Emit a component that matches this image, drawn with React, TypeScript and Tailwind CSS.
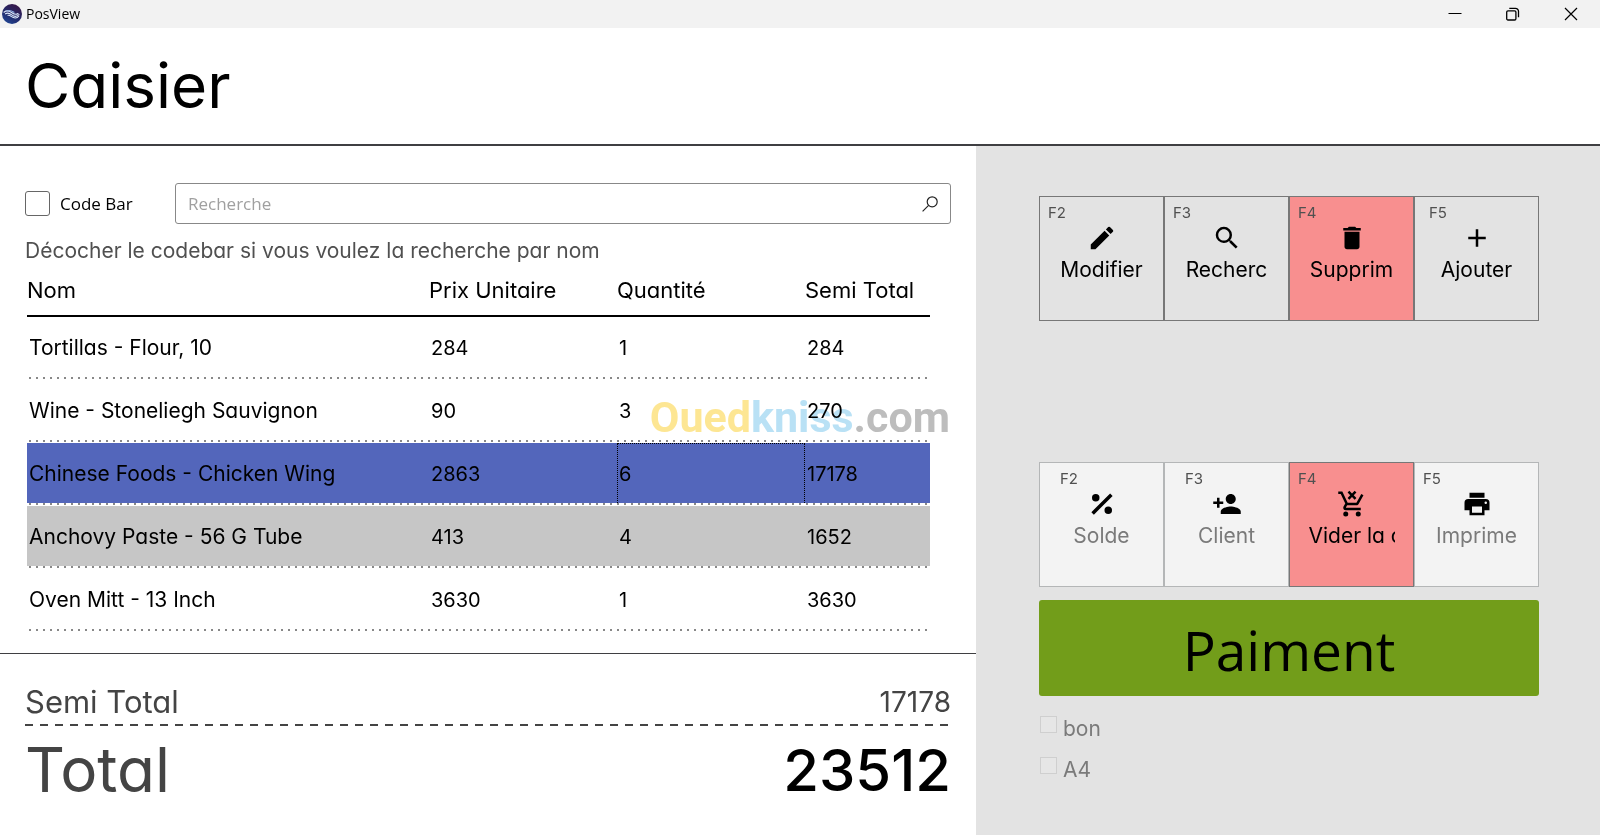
import type { ReactNode } from "react";
import { MdAdd, MdDelete, MdEdit, MdPersonAdd, MdSearch } from "react-icons/md";

type Line = { name: string; price: number; qty: number; total: number; state?: "selected" | "hover" };

const lines: Line[] = [
  { name: "Tortillas - Flour, 10", price: 284, qty: 1, total: 284 },
  { name: "Wine - Stoneliegh Sauvignon", price: 90, qty: 3, total: 270 },
  { name: "Chinese Foods - Chicken Wing", price: 2863, qty: 6, total: 17178, state: "selected" },
  { name: "Anchovy Paste - 56 G Tube", price: 413, qty: 4, total: 1652, state: "hover" },
  { name: "Oven Mitt - 13 Inch", price: 3630, qty: 1, total: 3630 },
];

function MdiIcon({ d }: { d: string }) {
  return (
    <svg viewBox="0 0 24 24" className="size-[30px]" fill="currentColor" aria-hidden="true">
      <path d={d} />
    </svg>
  );
}

const percentPath =
  "M18.5,3.5L3.5,18.5L5.5,20.5L20.5,5.5M7,4A3,3 0 0,0 4,7A3,3 0 0,0 7,10A3,3 0 0,0 10,7A3,3 0 0,0 7,4M17,14A3,3 0 0,0 14,17A3,3 0 0,0 17,20A3,3 0 0,0 20,17A3,3 0 0,0 17,14Z";
const cartRemovePath =
  "M14.12,8.53L12,6.41L9.88,8.54L8.47,7.12L10.59,5L8.47,2.88L9.88,1.47L12,3.59L14.12,1.46L15.54,2.88L13.41,5L15.53,7.12L14.12,8.53M7,18A2,2 0 0,1 9,20A2,2 0 0,1 7,22A2,2 0 0,1 5,20A2,2 0 0,1 7,18M17,18A2,2 0 0,1 19,20A2,2 0 0,1 17,22A2,2 0 0,1 15,20A2,2 0 0,1 17,18M7.17,14.75A0.25,0.25 0 0,0 7.42,15H19V17H7A2,2 0 0,1 5,15C5,14.65 5.09,14.32 5.24,14.04L6.6,11.59L3,4H1V2H4.27L5.21,4L8.53,11H15.55L19.42,4L21.16,4.96L17.3,11.97C16.96,12.59 16.3,13 15.55,13H8.1L7.2,14.63L7.17,14.75Z";
const printerPath =
  "M18,3H6V7H18M19,12A1,1 0 0,1 18,11A1,1 0 0,1 19,10A1,1 0 0,1 20,11A1,1 0 0,1 19,12M16,19H8V14H16M19,8H5A3,3 0 0,0 2,11V17H6V21H18V17H22V11A3,3 0 0,0 19,8Z";

const tones = {
  plain: "border-[#777] bg-transparent text-black",
  danger: "border-[#777] bg-[#f88f8f] text-black",
  disabled: "border-[#b4b6b7] bg-[#f3f3f3] text-[#7a7a7a]",
};

function ActionButton({
  shortcut,
  label,
  icon,
  tone = "plain",
  inset = "near",
}: {
  shortcut: string;
  label: string;
  icon: ReactNode;
  tone?: keyof typeof tones;
  inset?: "near" | "mid" | "far";
}) {
  const pad = { near: "pl-2", mid: "pl-3.5", far: "pl-5" }[inset];
  return (
    <button
      type="button"
      disabled={tone === "disabled"}
      className={`flex h-[125px] flex-col items-center border pt-1.5 ${tones[tone]}`}
    >
      <span className={`w-full text-left text-[15px] leading-5 text-[#505050] ${pad}`}>{shortcut}</span>
      <span className="flex h-[30px] items-center text-black">{icon}</span>
      <span className="mt-0.5 w-[86px] overflow-hidden text-center text-[21px] leading-[30px] whitespace-nowrap">
        {label}
      </span>
    </button>
  );
}

function TitleBar() {
  return (
    <div className="flex h-7 items-center bg-[#f2f2f2] pl-0.5 font-['Open_Sans',sans-serif]">
      <svg viewBox="0 0 20 20" className="size-5" aria-hidden="true">
        <defs>
          <linearGradient id="badge" x1="0.8" y1="0" x2="0.2" y2="1">
            <stop offset="0" stopColor="#3a1545" />
            <stop offset="0.55" stopColor="#232a6b" />
            <stop offset="1" stopColor="#1f4796" />
          </linearGradient>
        </defs>
        <circle cx="10" cy="10" r="10" fill="url(#badge)" />
        <g fill="none" stroke="#dbe8fb" strokeWidth="1.1" strokeLinecap="round">
          <path d="M2 8.2c3-2.4 5.400-1.200 7.500.3s4.500 2.500 6.500 1" />
          <path d="M3.500 9.800c2.500-1.800 4.500-.3 6.300 1.100s4.700 2.300 7.200-.4" />
          <path d="M6 11.300c2-.4 3 1.200 4.800 2 2.200 1 4.700.6 6-1.300" />
          <path d="M5 7c3-1.500 5 0 7 1.200" stroke="#8fb1e6" />
        </g>
      </svg>
      <span className="pl-1 text-[14px] leading-5 text-black">PosView</span>
      <div className="ml-auto flex h-full text-black">
        <button type="button" aria-label="Minimize" className="grid w-[58px] place-items-center">
          <svg viewBox="0 0 14 14" className="size-3.5" fill="none" stroke="currentColor">
            <path d="M0.500 6.500h13" />
          </svg>
        </button>
        <button type="button" aria-label="Restore" className="grid w-[58px] place-items-center">
          <svg viewBox="0 0 14 14" className="size-3.5" fill="none" stroke="currentColor" strokeWidth="1.300">
            <rect x="0.700" y="3.800" width="9.200" height="9.200" rx="1.300" />
            <path d="M3.300 1.300h6.200a3 3 0 0 1 3 3v6" />
          </svg>
        </button>
        <button type="button" aria-label="Close" className="grid w-[58px] place-items-center">
          <svg viewBox="0 0 14 14" className="size-3.5" fill="none" stroke="currentColor" strokeWidth="1.200">
            <path d="M1 1l12 12M13 1L1 13" />
          </svg>
        </button>
      </div>
    </div>
  );
}

function SaleTable() {
  const fills = { none: "", selected: "bg-[#5366bb]", hover: "bg-[#c6c6c6]" };
  return (
    <div className="relative mr-[21px] ml-0.5">
      <table className="w-full table-fixed border-separate border-spacing-0 text-left text-black">
        <colgroup>
          <col />
          <col className="w-[188px]" />
          <col className="w-[188px]" />
          <col className="w-[125px]" />
        </colgroup>
        <thead>
          <tr className="h-[51px] text-[22px]">
            {["Nom", "Prix Unitaire", "Quantité", "Semi Total"].map((h) => (
              <th key={h} scope="col" className="border-b-2 border-black p-0 font-normal whitespace-nowrap">
                {h}
              </th>
            ))}
          </tr>
        </thead>
        <tbody className="text-[20px]">
          {lines.map((l) => {
            const cell = `border-b-3 border-transparent bg-clip-padding p-0 pt-0.5 pl-0.5 ${fills[l.state ?? "none"]}`;
            return (
              <tr
                key={l.name}
                className="h-[63px] bg-[repeating-linear-gradient(90deg,#888_0_2px,transparent_2px_7px)] bg-[length:calc(100%-5px)_2px] bg-[position:2px_calc(100%-1px)] bg-no-repeat"
              >
                <td className={`text-[21px] ${cell}`}>{l.name}</td>
                <td className={cell}>{l.price}</td>
                <td className={`relative ${cell}`}>
                  {l.qty}
                  {l.state === "selected" && (
                    <span className="absolute inset-0 border border-b-0 border-dotted border-black" />
                  )}
                </td>
                <td className={cell}>{l.total}</td>
              </tr>
            );
          })}
        </tbody>
      </table>
      <div className="pointer-events-none absolute top-[121px] -right-5 font-['Roboto',sans-serif] text-[43px] leading-[60px] font-bold mix-blend-multiply">
        <span className="text-[#fde693]">Oued</span>
        <span className="text-[#b9e1f5]">kniss</span>
        <span className="text-[#bdbdbd]">.com</span>
      </div>
    </div>
  );
}

function PrintOption({ id, label }: { id: string; label: string }) {
  return (
    <div className="flex h-[41px] items-start gap-1.5 pl-px">
      <input
        id={id}
        type="checkbox"
        disabled
        className="size-[17px] appearance-none border border-[#cfcfcf] bg-[#e6e6e6]"
      />
      <label htmlFor={id} className="text-[21px] leading-[26px] text-[#7a7a7a]">
        {label}
      </label>
    </div>
  );
}

export default function App() {
  return (
    <div className="flex min-h-screen flex-col bg-white font-['Inter',sans-serif] [font-feature-settings:'cv11']">
      <TitleBar />
      <header className="border-b-2 border-[#3f3f42] px-[25px] pt-[22px] pb-[22px]">
        <h1 className="text-[62px] leading-[72px] text-black">Caisier</h1>
      </header>

      <main className="grid flex-1 grid-cols-[61fr_39fr]">
        <div className="flex flex-col">
          <section className="px-[25px] pt-[37px]">
            <div className="flex items-center font-['Open_Sans',sans-serif] text-[17px]">
              <input
                id="codebar"
                type="checkbox"
                className="size-[25px] appearance-none rounded-[3px] border border-[#666] bg-white"
              />
              <label htmlFor="codebar" className="w-[125px] pl-2.5 text-black">
                Code Bar
              </label>
              <div className="flex h-[41px] flex-1 items-center rounded-[3px] border border-[#888] px-3">
                <input
                  type="text"
                  aria-label="Recherche"
                  placeholder="Recherche"
                  className="min-w-0 flex-1 bg-transparent outline-none placeholder:text-[#a0a0a0]"
                />
                <svg viewBox="0 0 16 16" className="size-4" fill="none" stroke="#222" strokeWidth="1.200">
                  <circle cx="10.200" cy="5.800" r="5" />
                  <path d="M6.600 9.400L0.600 15.400" />
                </svg>
              </div>
            </div>
            <p className="mt-3 text-[21px] leading-[30px] text-[#505050]">
              Décocher le codebar si vous voulez la recherche par nom
            </p>
            <SaleTable />
          </section>

          <section className="mt-auto border-t border-[#3f3f42] px-[25px] pt-[26px] pb-[29px] text-[#444]">
            <div className="flex items-center justify-between leading-[44px]">
              <span className="text-[31px]">Semi Total</span>
              <span className="text-[28px]">17178</span>
            </div>
            <div className="h-0.5 bg-[repeating-linear-gradient(90deg,#444_0_8px,transparent_8px_15px)]" />
            <div className="flex items-center justify-between pt-2 leading-[72px]">
              <span className="text-[62px]">Total</span>
              <span className="text-[58px] font-medium text-black">23512</span>
            </div>
          </section>
        </div>

        <aside className="bg-[#e3e3e3] pt-[50px] pr-[61px] pl-[63px]">
          <div className="grid grid-cols-4">
            <ActionButton shortcut="F2" label="Modifier" icon={<MdEdit size={30} />} />
            <ActionButton shortcut="F3" label="Recherc" icon={<MdSearch size={30} />} />
            <ActionButton shortcut="F4" label="Supprim" tone="danger" icon={<MdDelete size={30} />} />
            <ActionButton shortcut="F5" label="Ajouter" inset="mid" icon={<MdAdd size={30} />} />
          </div>
          <div className="mt-[141px] grid grid-cols-4">
            <ActionButton shortcut="F2" label="Solde" tone="disabled" inset="far" icon={<MdiIcon d={percentPath} />} />
            <ActionButton shortcut="F3" label="Client" tone="disabled" inset="far" icon={<MdPersonAdd size={30} />} />
            <ActionButton shortcut="F4" label="Vider la caisse" tone="danger" icon={<MdiIcon d={cartRemovePath} />} />
            <ActionButton shortcut="F5" label="Imprime" tone="disabled" icon={<MdiIcon d={printerPath} />} />
          </div>
          <button
            type="button"
            className="mt-[13px] mb-5 h-24 w-full rounded-[3px] bg-[#729d1a] pt-1 font-['Open_Sans',sans-serif] text-[55px] leading-[80px] text-black"
          >
            Paiment
          </button>
          <PrintOption id="bon" label="bon" />
          <PrintOption id="a4" label="A4" />
        </aside>
      </main>
    </div>
  );
}
